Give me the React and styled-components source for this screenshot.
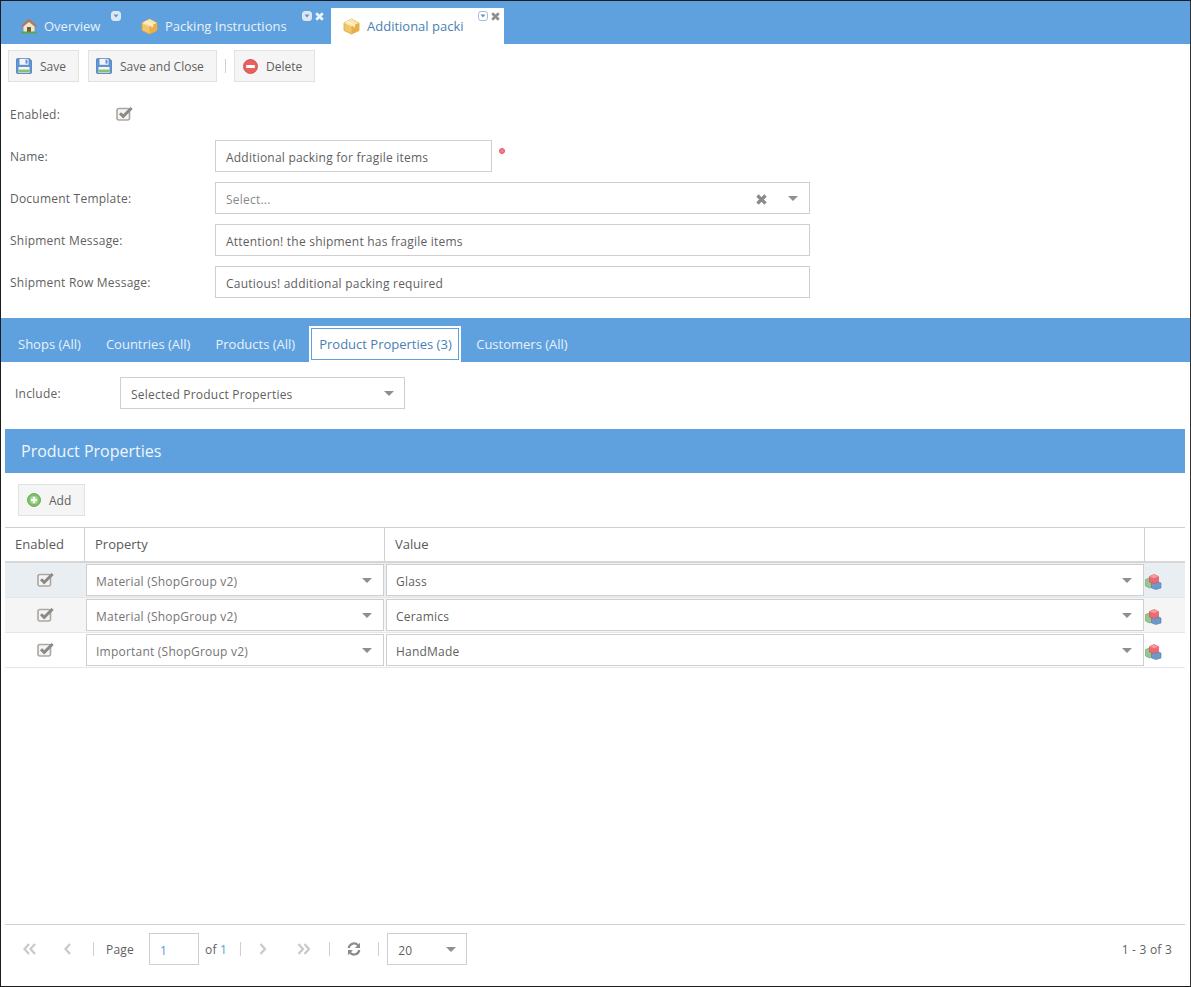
import React from "react";
import styled, { createGlobalStyle } from "styled-components";

const Global = createGlobalStyle`
    html, body { margin: 0; padding: 0; background: #fff; }
    * { box-sizing: border-box; }
`;

const BLUE = "#5fa1de";

const Page = styled.div`
    width: 1191px;
    height: 987px;
    border: 1px solid #1c1c1c;
    border-right-color: #333;
    display: flex;
    flex-direction: column;
    background: #fff;
    color: #5f5f5f;
    font-family: "Open Sans", sans-serif;
    font-size: 12px;
    letter-spacing: 0.22px;
    overflow: hidden;
`;

const TabBar = styled.div`
    height: 43px;
    background: ${BLUE};
    display: flex;
    align-items: flex-end;
    flex-shrink: 0;
    letter-spacing: 0;
`;

const MainTab = styled.div`
    position: relative;
    height: 36px;
    width: ${(p) => p.$w}px;
    padding-left: ${(p) => p.$pad}px;
    display: flex;
    align-items: center;
    gap: ${(p) => p.$gap}px;
    font-size: 13px;
    color: ${(p) => (p.$active ? "#4a7fb5" : "#e8f1fa")};
    background: ${(p) => (p.$active ? "#fff" : "transparent")};
`;

const TabTools = styled.div`
    position: absolute;
    top: 3px;
    right: ${(p) => p.$right}px;
    display: flex;
    align-items: center;
    gap: 3px;
`;

const Toolbar = styled.div`
    display: flex;
    align-items: center;
    padding: 6px 0 0 7px;
    flex-shrink: 0;
`;

const ToolButton = styled.div`
    height: 32px;
    width: ${(p) => p.$w}px;
    margin-right: ${(p) => p.$mr || 0}px;
    padding-left: ${(p) => p.$pad || 8}px;
    display: flex;
    align-items: center;
    gap: 8px;
    background: #f5f5f5;
    border: 1px solid #e2e2e2;
    color: #5f5f5f;
    letter-spacing: 0;
`;

const ToolSep = styled.div`
    width: 1px;
    height: 14px;
    background: #d0d0d0;
    margin-right: 8px;
`;

const Form = styled.div`
    display: flex;
    flex-direction: column;
    padding: 0 0 0 9px;
    flex-shrink: 0;
`;

const EnabledRow = styled.div`
    height: 58px;
    display: flex;
    align-items: center;
    padding-top: 6px;
`;

const FieldRow = styled.div`
    display: flex;
    align-items: center;
    height: 32px;
    margin-bottom: 10px;
`;

const Label = styled.div`
    width: ${(p) => p.$w}px;
    flex-shrink: 0;
`;

const Field = styled.div`
    width: ${(p) => p.$w}px;
    height: 32px;
    border: 1px solid #cfcfcf;
    background: #fff;
    padding: 2px 0 0 10px;
    display: flex;
    align-items: center;
    color: ${(p) => p.$color || "#5f5f5f"};
    flex-shrink: 0;
`;

const FieldText = styled.span`
    flex: 1;
    white-space: nowrap;
`;

const RequiredDot = styled.span`
    width: 6px;
    height: 6px;
    border-radius: 50%;
    background: #f0808a;
    border: 1px solid #e8525e;
    margin: -10px 0 0 7px;
`;

const Arrow = styled.span`
    width: 0;
    height: 0;
    border-left: 5px solid transparent;
    border-right: 5px solid transparent;
    border-top: 5px solid #8f8f8f;
    margin: -2px ${(p) => p.$mr || 10}px 0 ${(p) => p.$ml || 0}px;
    flex-shrink: 0;
`;

const SubTabBar = styled.div`
    height: 44px;
    margin-top: 10px;
    background: ${BLUE};
    display: flex;
    align-items: flex-end;
    padding-left: 17px;
    flex-shrink: 0;
    letter-spacing: 0;
`;

const SubTab = styled.div`
    height: 36px;
    padding-top: 9px;
    margin-right: ${(p) => p.$mr}px;
    color: #e8f1fa;
    font-size: 13px;
    white-space: nowrap;
`;

const ActiveSubTab = styled.div`
    width: 152px;
    height: 36px;
    background: #fff;
    padding: 2px 2px 0;
    margin: 0 15px 0 -1px;
`;

const ActiveSubTabInner = styled.div`
    height: 32px;
    border: 1px solid ${BLUE};
    padding: 6px 0 0 7px;
    color: #4a7fb5;
    font-size: 13px;
    white-space: nowrap;
`;

const IncludeRow = styled.div`
    display: flex;
    align-items: center;
    padding: 15px 0 0 14px;
    flex-shrink: 0;
`;

const Heading = styled.div`
    height: 44px;
    margin: 20px 5px 0 4px;
    background: ${BLUE};
    color: #f0f6fc;
    font-size: 16px;
    letter-spacing: 0;
    display: flex;
    align-items: center;
    padding-left: 16px;
    flex-shrink: 0;
`;

const AddRow = styled.div`
    padding: 11px 0 11px 17px;
    flex-shrink: 0;
`;

const Grid = styled.div`
    margin: 0 5px 0 4px;
    flex: 1;
    border-top: 1px solid #d0d0d0;
`;

const GridHead = styled.div`
    display: grid;
    grid-template-columns: 79px 300px 760px 1fr;
    height: 35px;
    border-bottom: 2px solid #d6d6d6;
    font-size: 13px;
    letter-spacing: 0;
`;

const HeadCell = styled.div`
    display: flex;
    align-items: center;
    padding: 0 0 2px ${(p) => p.$pad}px;
    border-left: ${(p) => (p.$first ? "none" : "1px solid #d0d0d0")};
    color: #5a5a5a;
`;

const GridRow = styled.div`
    display: grid;
    grid-template-columns: 81px 300px 759px 1fr;
    height: 35px;
    background: ${(p) => p.$bg};
    border-bottom: 1px solid #e6e6e6;
`;

const CheckCell = styled.div`
    display: flex;
    justify-content: center;
    padding: 10px 0 0;
`;

const SelectCell = styled.div`
    display: flex;
    align-items: center;
    height: 32px;
    margin: 1px ${(p) => p.$mr}px 0 0;
    border: 1px solid #cfcfcf;
    background: #fff;
    padding: 2px 0 0 9px;
    color: ${(p) => p.$color};
`;

const IconCell = styled.div`
    padding: 3px 0 0 0;
    display: flex;
    align-items: center;
`;

const Pager = styled.div`
    height: 62px;
    margin: 0 5px 0 4px;
    border-top: 1px solid #d0d0d0;
    display: flex;
    align-items: flex-start;
    padding-top: 8px;
    flex-shrink: 0;
`;

const PagerGroup = styled.div`
    height: 32px;
    display: flex;
    align-items: center;
    flex: ${(p) => (p.$grow ? 1 : "none")};
`;

const PagerSep = styled.div`
    width: 1px;
    height: 14px;
    background: #cfcfcf;
    margin: 0 ${(p) => p.$r}px 0 ${(p) => p.$l}px;
`;

const PagerIcon = styled.div`
    display: flex;
    width: ${(p) => p.$w}px;
    margin-left: ${(p) => p.$ml || 0}px;
`;

const PageNum = styled.div`
    width: 50px;
    height: 32px;
    border: 1px solid #cfcfcf;
    padding: 2px 0 0 10px;
    display: flex;
    align-items: center;
    color: #5b9bd5;
    margin: 0 6px 0 15px;
`;

const Link = styled.span`
    color: #5b9bd5;
`;

const Summary = styled.div`
    margin-right: 13px;
    color: #5f5f5f;
`;

const DarkIcon = styled.svg`
    display: block;
    flex-shrink: 0;
`;

function HomeIcon() {
    return (
        <DarkIcon width="18" height="16" viewBox="0 0 18 16">
            <path d="M1 8 9 1l8 7-1.5 1L9 3.5 2.5 9z" fill="#c8703a" />
            <path d="M3.5 8.5 9 4l5.5 4.5V14h-11z" fill="#f3e6c8" />
            <rect x="7" y="9" width="4" height="5" fill="#7a5a3a" />
            <rect x="1" y="13.5" width="16" height="2" rx="1" fill="#5da545" />
        </DarkIcon>
    );
}

function BoxIcon() {
    return (
        <DarkIcon width="17" height="17" viewBox="0 0 17 17">
            <path d="M8.5 1 16 5v7.5L8.5 16 1 12.5V5z" fill="#f2c66a" stroke="#d9a441" strokeWidth=".8" />
            <path d="M1 5l7.5 3.6L16 5 8.5 1z" fill="#fbe6ad" />
            <path d="M8.5 8.6V16L16 12.5V5z" fill="#e8ae48" />
            <path d="M4.5 3.1 12 6.8v2.2l-1.6.7V7.5L3 3.9z" fill="#fff3d2" />
        </DarkIcon>
    );
}

function DropBadge({ active }) {
    return (
        <DarkIcon width="10" height="10" viewBox="0 0 10 10">
            <rect x=".5" y=".5" width="9" height="9" rx="2.5" fill={active ? "#fff" : "#dbe8f7"} stroke={active ? "#9dbfe6" : "#dbe8f7"} />
            <path d="M2.5 3.5h5L5 6.5z" fill="#6f8fb5" />
        </DarkIcon>
    );
}

function CloseMark({ color, size = 9 }) {
    return (
        <DarkIcon width={size} height={size} viewBox="0 0 9 9">
            <path d="M1.2 1.2 7.8 7.8M7.8 1.2 1.2 7.8" stroke={color} strokeWidth="2.7" />
        </DarkIcon>
    );
}

function FloppyIcon() {
    return (
        <DarkIcon width="16" height="16" viewBox="0 0 16 16">
            <path d="M.5 1.5a1 1 0 0 1 1-1h12l2 2v12a1 1 0 0 1-1 1h-13a1 1 0 0 1-1-1z" fill="#5f93d2" stroke="#3f74b0" strokeWidth=".7" />
            <rect x="3.5" y=".8" width="9" height="6" fill="#f2f5f9" />
            <rect x="9.5" y="1.6" width="2" height="4" fill="#5f93cf" />
            <rect x="2.5" y="9" width="11" height="6" fill="#f4f6f8" />
            <rect x="2.5" y="11.5" width="11" height="3" fill="#8cc07a" />
        </DarkIcon>
    );
}

function DeleteIcon() {
    return (
        <DarkIcon width="15" height="15" viewBox="0 0 15 15">
            <circle cx="7.5" cy="7.5" r="7" fill="#e9605c" stroke="#c94843" strokeWidth=".8" />
            <rect x="3.2" y="6" width="8.6" height="3" fill="#fff" />
        </DarkIcon>
    );
}

function AddIcon() {
    return (
        <DarkIcon width="14" height="14" viewBox="0 0 14 14">
            <circle cx="7" cy="7" r="6.5" fill="#7cc06a" stroke="#5aa34a" strokeWidth=".8" />
            <circle cx="7" cy="7" r="4" fill="#a9dc98" />
            <path d="M7 4v6M4 7h6" stroke="#fff" strokeWidth="1.8" />
        </DarkIcon>
    );
}

function CheckIcon() {
    return (
        <DarkIcon width="17" height="14" viewBox="0 0 17 14">
            <rect x="1" y="1.5" width="12.5" height="11.5" rx="2" fill="#f4f4f4" stroke="#aca6a0" strokeWidth="1.6" />
            <path d="M4 6.2 7.2 9.4 15.6 1" fill="none" stroke="#8c8985" strokeWidth="3" />
        </DarkIcon>
    );
}

function CubesIcon() {
    return (
        <DarkIcon width="17" height="16" viewBox="0 0 17 16">
            <path d="M.5 5.5 4.5 4l3 2v7l-3 1-4-2z" fill="#9cc48f" stroke="#6f9f62" strokeWidth=".6" />
            <path d="M6.5 8.5 11 7l5 2v5l-5 1.5L6.5 14z" fill="#6b9acb" stroke="#4d7cad" strokeWidth=".6" />
            <path d="M4.5 2.5 9 .5 13.5 2.5v5.5L9 9.5 4.5 8z" fill="#ec6a70" stroke="#d24e55" strokeWidth=".6" />
            <path d="M4.5 2.5 9 4.2l4.5-1.7L9 .5z" fill="#f59a9d" />
        </DarkIcon>
    );
}

function Chevron({ dbl, left, color = "#c9c9c9" }) {
    const d = left ? "M6 1 1.5 6 6 11" : "M1.5 1 6 6 1.5 11";
    return (
        <DarkIcon width={dbl ? 14 : 8} height="12" viewBox={dbl ? "0 0 14 12" : "0 0 8 12"}>
            <path d={d} fill="none" stroke={color} strokeWidth="2.2" />
            {dbl && <path d={d} transform="translate(6 0)" fill="none" stroke={color} strokeWidth="2.2" />}
        </DarkIcon>
    );
}

function RefreshIcon() {
    return (
        <DarkIcon width="14" height="14" viewBox="0 0 14 14">
            <path d="M1.7 6A5.4 5.4 0 0 1 11 3.2" fill="none" stroke="#8a8a8a" strokeWidth="2.2" />
            <path d="M13 .8V6H8z" fill="#8a8a8a" />
            <path d="M12.3 8A5.4 5.4 0 0 1 3 10.8" fill="none" stroke="#8a8a8a" strokeWidth="2.2" />
            <path d="M1 13.2V8h5z" fill="#8a8a8a" />
        </DarkIcon>
    );
}

const rows = [
    { property: "Material (ShopGroup v2)", value: "Glass", bg: "#e9eef3" },
    { property: "Material (ShopGroup v2)", value: "Ceramics", bg: "#f5f5f5" },
    { property: "Important (ShopGroup v2)", value: "HandMade", bg: "#fff" }
];

const App = () => {
    return (
        <Page>
            <Global />
            <TabBar>
                <MainTab $w={122} $pad={19} $gap={6}>
                    <HomeIcon />
                    Overview
                    <TabTools $right={2}>
                        <DropBadge />
                    </TabTools>
                </MainTab>
                <MainTab $w={208} $pad={18} $gap={7}>
                    <BoxIcon />
                    Packing Instructions
                    <TabTools $right={7}>
                        <DropBadge />
                        <CloseMark color="#eef5fc" />
                    </TabTools>
                </MainTab>
                <MainTab $w={173} $pad={12} $gap={7} $active>
                    <BoxIcon />
                    Additional packi
                    <TabTools $right={4}>
                        <DropBadge active />
                        <CloseMark color="#8f8f8f" />
                    </TabTools>
                </MainTab>
            </TabBar>

            <Toolbar>
                <ToolButton $w={71} $mr={9} $pad={7}>
                    <FloppyIcon />
                    Save
                </ToolButton>
                <ToolButton $w={129} $mr={8} $pad={7}>
                    <FloppyIcon />
                    Save and Close
                </ToolButton>
                <ToolSep />
                <ToolButton $w={81}>
                    <DeleteIcon />
                    Delete
                </ToolButton>
            </Toolbar>

            <Form>
                <EnabledRow>
                    <Label $w={106}>Enabled:</Label>
                    <CheckIcon />
                </EnabledRow>
                <FieldRow>
                    <Label $w={205}>Name:</Label>
                    <Field $w={277}>Additional packing for fragile items</Field>
                    <RequiredDot />
                </FieldRow>
                <FieldRow>
                    <Label $w={205}>Document Template:</Label>
                    <Field $w={595} $color="#8a8a8a">
                        <FieldText>Select...</FieldText>
                        <CloseMark color="#8a8a8a" size={11} />
                        <Arrow $mr={11} $ml={21} />
                    </Field>
                </FieldRow>
                <FieldRow>
                    <Label $w={205}>Shipment Message:</Label>
                    <Field $w={595}>Attention! the shipment has fragile items</Field>
                </FieldRow>
                <FieldRow>
                    <Label $w={205}>Shipment Row Message:</Label>
                    <Field $w={595}>Cautious! additional packing required</Field>
                </FieldRow>
            </Form>

            <SubTabBar>
                <SubTab $mr={25}>Shops (All)</SubTab>
                <SubTab $mr={25}>Countries (All)</SubTab>
                <SubTab $mr={15}>Products (All)</SubTab>
                <ActiveSubTab>
                    <ActiveSubTabInner>Product Properties (3)</ActiveSubTabInner>
                </ActiveSubTab>
                <SubTab $mr={0}>Customers (All)</SubTab>
            </SubTabBar>

            <IncludeRow>
                <Label $w={105}>Include:</Label>
                <Field $w={285}>
                    <FieldText>Selected Product Properties</FieldText>
                    <Arrow />
                </Field>
            </IncludeRow>

            <Heading>Product Properties</Heading>

            <AddRow>
                <ToolButton $w={67}>
                    <AddIcon />
                    Add
                </ToolButton>
            </AddRow>

            <Grid>
                <GridHead>
                    <HeadCell $first $pad={10}>Enabled</HeadCell>
                    <HeadCell $pad={10}>Property</HeadCell>
                    <HeadCell $pad={10}>Value</HeadCell>
                    <HeadCell $pad={0} />
                </GridHead>
                {rows.map((row, i) => (
                    <GridRow key={i} $bg={row.bg}>
                        <CheckCell>
                            <CheckIcon />
                        </CheckCell>
                        <SelectCell $mr={2} $color="#757575">
                            <FieldText>{row.property}</FieldText>
                            <Arrow $mr={11} />
                        </SelectCell>
                        <SelectCell $mr={1} $color="#5f5f5f">
                            <FieldText>{row.value}</FieldText>
                            <Arrow $mr={11} />
                        </SelectCell>
                        <IconCell>
                            <CubesIcon />
                        </IconCell>
                    </GridRow>
                ))}
            </Grid>

            <Pager>
                <PagerGroup $grow>
                    <PagerIcon $w={41} $ml={18}>
                        <Chevron dbl left />
                    </PagerIcon>
                    <PagerIcon $w={29}>
                        <Chevron left />
                    </PagerIcon>
                    <PagerSep $l={0} $r={12} />
                    Page
                    <PageNum>1</PageNum>
                    <span>
                        of <Link>1</Link>
                    </span>
                    <PagerSep $l={13} $r={18} />
                    <PagerIcon $w={38}>
                        <Chevron />
                    </PagerIcon>
                    <PagerIcon $w={32}>
                        <Chevron dbl />
                    </PagerIcon>
                    <PagerSep $l={0} $r={17} />
                    <RefreshIcon />
                    <PagerSep $l={17} $r={8} />
                    <Field $w={80}>
                        <FieldText>20</FieldText>
                        <Arrow />
                    </Field>
                </PagerGroup>
                <PagerGroup>
                    <Summary>1 - 3 of 3</Summary>
                </PagerGroup>
            </Pager>
        </Page>
    );
};

export default App;
